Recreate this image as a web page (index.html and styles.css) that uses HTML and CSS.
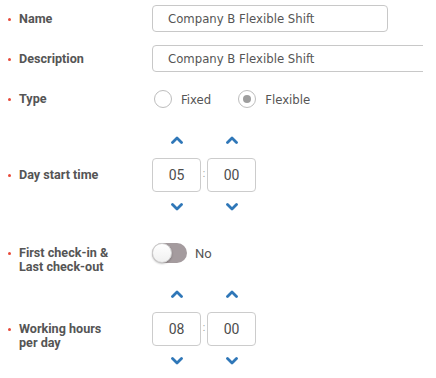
FILE: index.html
```html
<!DOCTYPE html>
<html lang="en">
<head>
  <meta charset="UTF-8" />
  <meta name="viewport" content="width=device-width, initial-scale=1.0"/>
  <title>Shift settings</title>
<link rel="stylesheet" href="styles.css">
</head>
<body>
  <form class="shift-form">
    <div class="row row-input">
      <label class="label"><span class="req"></span><span>Name</span></label>
      <input class="text-input name-input" type="text" value="Company B Flexible Shift">
    </div>

    <div class="row row-input">
      <label class="label"><span class="req"></span><span>Description</span></label>
      <input class="text-input desc-input" type="text" value="Company B Flexible Shift">
    </div>

    <div class="row row-type">
      <label class="label"><span class="req"></span><span>Type</span></label>
      <div class="radios">
        <span class="radio"><span class="circle"></span>Fixed</span>
        <span class="radio"><span class="circle checked"></span>Flexible</span>
      </div>
    </div>

    <div class="row row-time">
      <label class="label"><span class="req"></span><span>Day start time</span></label>
      <div class="picker">
        <div class="col">
          <button type="button" class="chev"><svg width="12" height="8" viewBox="0 0 12 8"><polyline points="1.5,6.5 6,2 10.5,6.5"/></svg></button>
          <div class="box">05</div>
          <button type="button" class="chev down"><svg width="12" height="8" viewBox="0 0 12 8"><polyline points="1.5,1.5 6,6 10.5,1.5"/></svg></button>
        </div>
        <span class="colon">:</span>
        <div class="col">
          <button type="button" class="chev"><svg width="12" height="8" viewBox="0 0 12 8"><polyline points="1.5,6.5 6,2 10.5,6.5"/></svg></button>
          <div class="box">00</div>
          <button type="button" class="chev down"><svg width="12" height="8" viewBox="0 0 12 8"><polyline points="1.5,1.5 6,6 10.5,1.5"/></svg></button>
        </div>
      </div>
    </div>

    <div class="row row-toggle">
      <label class="label"><span class="req"></span><span>First check-in &amp;<br>Last check-out</span></label>
      <div class="switch-wrap">
        <span class="switch"><span class="knob"></span></span>
        <span class="switch-text">No</span>
      </div>
    </div>

    <div class="row row-time after-toggle">
      <label class="label"><span class="req"></span><span>Working hours<br>per day</span></label>
      <div class="picker">
        <div class="col">
          <button type="button" class="chev"><svg width="12" height="8" viewBox="0 0 12 8"><polyline points="1.5,6.5 6,2 10.5,6.5"/></svg></button>
          <div class="box">08</div>
          <button type="button" class="chev down"><svg width="12" height="8" viewBox="0 0 12 8"><polyline points="1.5,1.5 6,6 10.5,1.5"/></svg></button>
        </div>
        <span class="colon">:</span>
        <div class="col">
          <button type="button" class="chev"><svg width="12" height="8" viewBox="0 0 12 8"><polyline points="1.5,6.5 6,2 10.5,6.5"/></svg></button>
          <div class="box">00</div>
          <button type="button" class="chev down"><svg width="12" height="8" viewBox="0 0 12 8"><polyline points="1.5,1.5 6,6 10.5,1.5"/></svg></button>
        </div>
      </div>
    </div>
  </form>
</body>
</html>
```

FILE: styles.css
```css
body {
  margin: 0;
  padding: 0;
  background-color: #ffffff;
  font-family: Roboto, 'Liberation Sans', sans-serif;
  color: #555555;
}

.shift-form {
  width: 423px;
  overflow: hidden;
  padding-top: 5px;
}

.row {
  display: flex;
  align-items: flex-start;
}

.label {
  display: flex;
  align-items: flex-start;
  width: 144px;
  flex: none;
  padding-left: 8px;
  font-size: 12.6px;
  font-weight: bold;
  line-height: 14px;
  color: #555555;
}

.req {
  flex: none;
  width: 3px;
  height: 3px;
  margin: 6px 8px 0 0;
  border-radius: 50%;
  background-color: #e8493a;
}

/* text inputs */
.row-input {
  align-items: center;
  margin-bottom: 13px;
}

.text-input {
  flex: none;
  box-sizing: border-box;
  height: 27px;
  margin: 0;
  padding: 0 0 0 15px;
  border: 1px solid #c8c8c8;
  border-radius: 4px;
  font-family: 'DejaVu Sans Condensed', 'DejaVu Sans', sans-serif;
  font-size: 13px;
  color: #555555;
  outline: none;
}

.name-input {
  width: 236px;
}

.desc-input {
  width: 300px;
}

/* radios */
.row-type {
  align-items: center;
  margin-top: 18px;
}

.radios {
  display: flex;
  gap: 27px;
}

.radio {
  display: flex;
  align-items: center;
  gap: 9px;
  font-family: 'DejaVu Sans Condensed', 'DejaVu Sans', sans-serif;
  font-size: 13px;
  color: #555555;
}

.radio:first-child {
  padding-left: 2px;
}

.circle {
  box-sizing: border-box;
  width: 18px;
  height: 18px;
  border: 1px solid #bdbdbd;
  border-radius: 50%;
  display: flex;
  align-items: center;
  justify-content: center;
}

.circle.checked::after {
  content: "";
  width: 8px;
  height: 8px;
  border-radius: 50%;
  background-color: #9e9e9e;
}

/* time picker */
.row-time {
  margin-top: 22px;
}

.row-time.after-toggle {
  margin-top: 10px;
}

.row-time .label {
  padding-top: 38px;
}

.picker {
  display: flex;
  align-items: center;
}

.col {
  display: flex;
  flex-direction: column;
  align-items: center;
  width: 49px;
}

.chev {
  display: flex;
  align-items: center;
  justify-content: center;
  width: 30px;
  height: 20px;
  margin: 0 0 8px;
  padding: 0;
  border: none;
  background: none;
  cursor: pointer;
}

.chev.down {
  margin: 5px 0 0;
}

.chev polyline {
  fill: none;
  stroke: #2f77b8;
  stroke-width: 2.8;
  stroke-linecap: round;
  stroke-linejoin: round;
}

.box {
  box-sizing: border-box;
  width: 49px;
  height: 34px;
  border: 1px solid #cccccc;
  border-radius: 4px;
  text-align: center;
  line-height: 32px;
  font-size: 14px;
  color: #4d4d4d;
}

.colon {
  width: 6px;
  text-align: center;
  font-size: 10px;
  color: #999999;
}

/* toggle */
.row-toggle {
  margin-top: 26px;
}

.row-toggle .label {
  padding-top: 3px;
}

.switch-wrap {
  display: flex;
  align-items: center;
  gap: 8px;
}

.switch {
  display: flex;
  align-items: center;
  width: 35px;
  height: 20px;
  border-radius: 10px;
  background-color: #a49b9e;
}

.knob {
  box-sizing: border-box;
  width: 20px;
  height: 20px;
  border-radius: 50%;
  border: 1px solid #d0d0d0;
  background: linear-gradient(#ffffff, #f0f0f0);
  box-shadow: 0 1px 2px rgba(0, 0, 0, 0.25);
}

.switch-text {
  font-size: 13px;
  color: #555555;
}
```
